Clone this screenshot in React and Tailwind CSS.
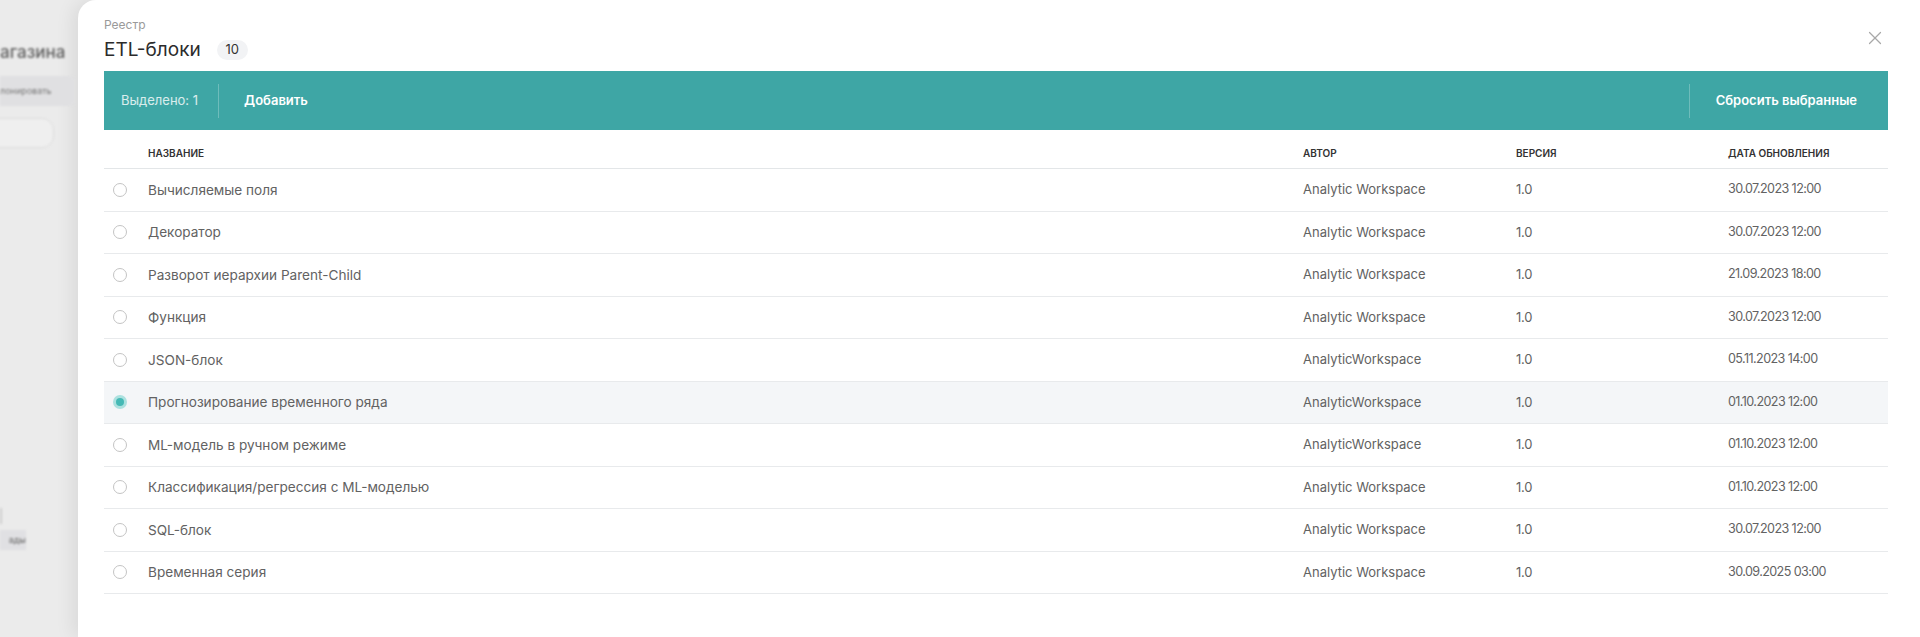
import { X } from 'lucide-react'

const rows = [
  { name: 'Вычисляемые поля', author: 'Analytic Workspace', version: '1.0', date: '30.07.2023 12:00' },
  { name: 'Декоратор', author: 'Analytic Workspace', version: '1.0', date: '30.07.2023 12:00' },
  { name: 'Разворот иерархии Parent-Child', author: 'Analytic Workspace', version: '1.0', date: '21.09.2023 18:00' },
  { name: 'Функция', author: 'Analytic Workspace', version: '1.0', date: '30.07.2023 12:00' },
  { name: 'JSON-блок', author: 'AnalyticWorkspace', version: '1.0', date: '05.11.2023 14:00' },
  { name: 'Прогнозирование временного ряда', author: 'AnalyticWorkspace', version: '1.0', date: '01.10.2023 12:00', selected: true },
  { name: 'ML-модель в ручном режиме', author: 'AnalyticWorkspace', version: '1.0', date: '01.10.2023 12:00' },
  { name: 'Классификация/регрессия с ML-моделью', author: 'Analytic Workspace', version: '1.0', date: '01.10.2023 12:00' },
  { name: 'SQL-блок', author: 'Analytic Workspace', version: '1.0', date: '30.07.2023 12:00' },
  { name: 'Временная серия', author: 'Analytic Workspace', version: '1.0', date: '30.09.2025 03:00' },
]

const cols = 'grid grid-cols-[44px_1fr_213px_212px_160px]'

function Radio({ checked }) {
  if (checked) {
    return (
      <span className="flex h-[14px] w-[14px] items-center justify-center rounded-full bg-[#ace1df]">
        <span className="h-[8px] w-[8px] rounded-full bg-[#45b9b5]" />
      </span>
    )
  }
  return <span className="block h-[14px] w-[14px] rounded-full border-[1.5px] border-[#c4c4c4]" />
}

function Backdrop() {
  return (
    <div className="w-[78px] shrink-0 overflow-hidden bg-[#ebebeb]">
      <div className="blur-[1.2px]">
        <div className="mt-[40px] whitespace-nowrap text-[17px] font-medium text-[#606060]">агазина</div>
        <div className="mt-[10px] flex h-[30px] w-[74px] items-center rounded-r bg-[#e0e0e2] text-[9px] text-[#777] whitespace-nowrap">
          лонировать
        </div>
        <div className="mt-[12px] ml-[-20px] h-[30px] w-[74px] rounded-xl border border-[#dcdcdc] bg-[#efefef]" />
        <div className="mt-[360px] h-[16px] w-[2px] bg-[#cfcfcf]" />
        <div className="mt-[6px] flex h-[20px] w-[26px] items-center justify-end bg-[#e0e0e3] text-[9px] text-[#666]">ады</div>
      </div>
    </div>
  )
}

export default function App() {
  return (
    <div className="flex h-[637px] w-full overflow-hidden bg-[#ebebeb] font-['Inter',sans-serif]">
      <Backdrop />
      <div className="flex-1 rounded-tl-[18px] bg-white pt-[17px] pl-[26px] pr-[32px] shadow-[-6px_0_18px_rgba(0,0,0,0.07)]">
        <div className="flex items-start justify-between">
          <div>
            <div className="h-4 text-[12px] leading-4 text-[#9a9a9a]">Реестр</div>
            <div className="mt-[3px] flex h-[28px] items-center">
              <span className="text-[19px] leading-7 text-[#2b2b2b]">ETL-блоки</span>
              <span className="ml-[16px] flex h-[20px] w-[31px] items-center justify-center rounded-full bg-[#f2f3f5] text-[13px] text-[#333]">
                10
              </span>
            </div>
          </div>
          <button type="button" className="mt-[10px] mr-[2px] text-[#a8a8a8]">
            <X size={22} strokeWidth={1.3} />
          </button>
        </div>

        <div className="mt-[7px] flex h-[59px] items-center bg-[#3ea6a5] pl-[17px] pr-[31px] text-[13px]">
          <span className="text-white/80">Выделено: 1</span>
          <span className="ml-[20px] h-[34px] w-px bg-white/25" />
          <span className="ml-[25px] font-semibold text-white">Добавить</span>
          <span className="ml-auto h-[34px] w-px bg-white/25" />
          <span className="ml-[26px] font-semibold text-white">Сбросить выбранные</span>
        </div>

        <div className={`${cols} h-[39px] border-b border-[#e3e6e8] pt-[16px] text-[10px] font-semibold uppercase leading-[15px] text-[#333]`}>
          <span />
          <span>Название</span>
          <span>Автор</span>
          <span>Версия</span>
          <span>Дата обновления</span>
        </div>

        {rows.map((r) => (
          <div
            key={r.name}
            className={`${cols} h-[42.5px] items-center border-b border-[#e8eaec] text-[13px] text-[#626262] ${r.selected ? 'bg-[#f4f6f8]' : ''}`}
          >
            <span className="pl-[9px]">
              <Radio checked={r.selected} />
            </span>
            <span className="text-[13.6px]">{r.name}</span>
            <span>{r.author}</span>
            <span className="tracking-[-0.2px]">{r.version}</span>
            <span className="text-[12.6px] tracking-[-0.6px]">{r.date}</span>
          </div>
        ))}
      </div>
    </div>
  )
}
